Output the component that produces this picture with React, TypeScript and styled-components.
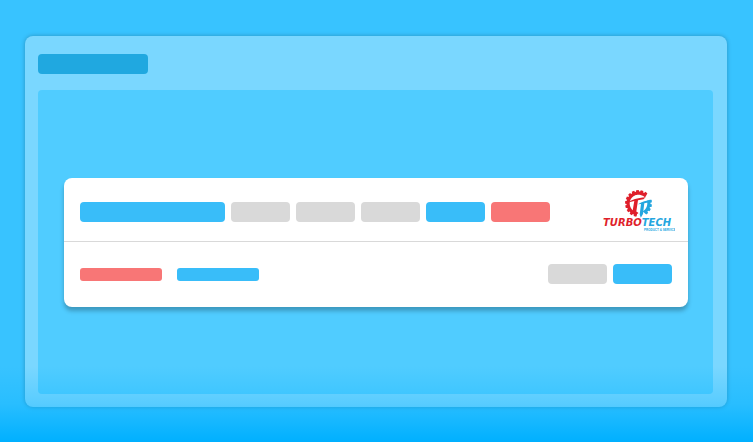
import React from "react";
import styled, { createGlobalStyle } from "styled-components";

const colors = {
  page: "#38c3ff",
  panel: "#7ad7ff",
  stage: "#50ccff",
  title: "#20a8e0",
  blue: "#39bdf9",
  red: "#f87676",
  gray: "#d9d9d9",
  logoRed: "#df1f2b",
  logoBlue: "#24a6df",
};

const GlobalStyle = createGlobalStyle`
  * { box-sizing: border-box; }
  body { margin: 0; background: ${colors.page}; }
`;

const Page = styled.main`
  position: relative;
  display: flex;
  min-height: 100vh;
  padding: 36px 26px 35px 25px;
  background: ${colors.page};
`;

const BottomFade = styled.div`
  position: absolute;
  inset: auto 0 0;
  height: 76px;
  pointer-events: none;
  background: linear-gradient(
    to bottom,
    rgba(0, 176, 255, 0),
    rgba(0, 176, 255, 0.28) 50%,
    rgb(0, 176, 255)
  );
`;

const Panel = styled.section`
  flex: 1;
  display: flex;
  flex-direction: column;
  gap: 16px;
  padding: 18px 14px 13px 13px;
  border-radius: 8px;
  background: ${colors.panel};
  box-shadow: 0 0 4px rgba(0, 0, 0, 0.25);
`;

const Stage = styled.div`
  flex: 1;
  display: flex;
  align-items: center;
  padding: 0 25px 0 26px;
  border-radius: 4px;
  background: ${colors.stage};
`;

const Card = styled.article`
  flex: 1;
  border-radius: 8px;
  background: #fff;
  box-shadow: 0 4px 4px rgba(0, 0, 0, 0.25);
`;

const CardRow = styled.div<{ $divided?: boolean }>`
  display: flex;
  align-items: center;
  justify-content: space-between;
  height: ${(p) => (p.$divided ? 64 : 65)}px;
  padding: ${(p) => (p.$divided ? "5px 13px 0 16px" : "0 16px")};
  border-bottom: ${(p) => (p.$divided ? `1px solid ${colors.gray}` : "none")};
`;

const Group = styled.div<{ $gap: number }>`
  display: flex;
  align-items: center;
  gap: ${(p) => p.$gap}px;
`;

const Bar = styled.div<{ $width: number; $tone: keyof typeof colors; $thin?: boolean }>`
  width: ${(p) => p.$width}px;
  height: ${(p) => (p.$thin ? 13 : 20)}px;
  border-radius: ${(p) => (p.$thin ? 3 : 4)}px;
  background: ${(p) => colors[p.$tone]};
`;

const LogoArt = styled.svg`
  display: block;
  width: 73px;
  height: 44px;
`;

// Angles are in degrees, clockwise from the top of the gear.
function gearArc(start: number, end: number) {
  const point = (angle: number, radius: number) => {
    const t = (angle * Math.PI) / 180;
    return `${(36.5 + radius * Math.sin(t)).toFixed(2)} ${(13.5 - radius * Math.cos(t)).toFixed(2)}`;
  };
  const outer: string[] = [];
  for (let a = start; a < end; a += 20) {
    outer.push(point(a, 12), point(a + 2, 13.5), point(a + 13, 13.5), point(a + 15, 12));
  }
  const inner: string[] = [];
  for (let a = end; a >= start; a -= 5) inner.push(point(a, 8.8));
  return `M${[...outer, ...inner].join("L")}Z`;
}

function Logo() {
  return (
    <LogoArt viewBox="0 0 73 44" role="img" aria-label="TurboTech">
      <path d={gearArc(188, 408)} fill={colors.logoRed} />
      <path d={gearArc(72, 152)} fill={colors.logoBlue} />
      <path
        d="M26 12.5C30 9.5 35 8 43.5 7.3L41.5 9.3L36 10.2L34.3 21.5L36.5 23L34.5 24.5L30.5 21.5L32.3 11Z"
        fill={colors.logoRed}
      />
      <path
        d="M36 14.3C40 11.5 44 10.5 50 10L47.5 12.3L42.3 13.3L41 24L38.8 27.7L37.7 24.5L39 14Z"
        fill={colors.logoBlue}
      />
      <text
        x="1"
        y="36"
        fontFamily='"DejaVu Sans", sans-serif'
        fontSize="10"
        fontWeight="700"
        fontStyle="italic"
        fill={colors.logoRed}
      >
        TURBO<tspan fill={colors.logoBlue}>TECH</tspan>
      </text>
      <text
        x="42"
        y="41"
        fontFamily='"Liberation Sans", sans-serif'
        fontSize="3"
        fontWeight="700"
        fill={colors.logoBlue}
      >
        PRODUCT &amp; SERVICE
      </text>
    </LogoArt>
  );
}

export default function App() {
  return (
    <>
      <GlobalStyle />
      <Page>
        <Panel>
          <Bar $width={110} $tone="title" />
          <Stage>
            <Card>
              <CardRow $divided>
                <Group $gap={6}>
                  <Bar $width={145} $tone="blue" />
                  <Bar $width={59} $tone="gray" />
                  <Bar $width={59} $tone="gray" />
                  <Bar $width={59} $tone="gray" />
                  <Bar $width={59} $tone="blue" />
                  <Bar $width={59} $tone="red" />
                </Group>
                <Logo />
              </CardRow>
              <CardRow>
                <Group $gap={15}>
                  <Bar $width={82} $tone="red" $thin />
                  <Bar $width={82} $tone="blue" $thin />
                </Group>
                <Group $gap={6}>
                  <Bar $width={59} $tone="gray" />
                  <Bar $width={59} $tone="blue" />
                </Group>
              </CardRow>
            </Card>
          </Stage>
        </Panel>
        <BottomFade />
      </Page>
    </>
  );
}
